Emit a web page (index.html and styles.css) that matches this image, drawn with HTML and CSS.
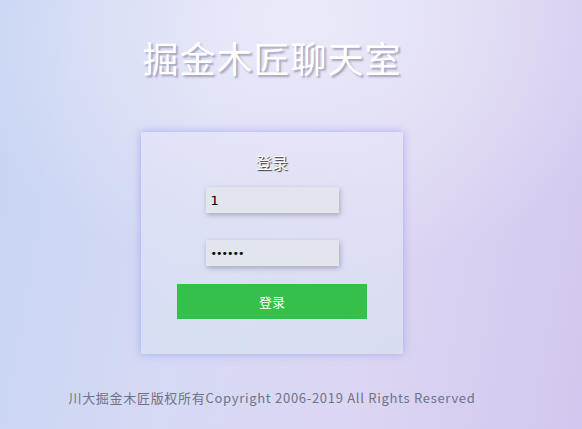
FILE: index.html
```html
<!DOCTYPE html>
<html lang="zh">
<head>
<meta charset="utf-8">
<title>掘金木匠聊天室</title>
<link rel="stylesheet" href="styles.css">
</head>
<body>
<div class="page">
  <h1 class="title">掘金木匠聊天室</h1>
  <form class="card">
    <h2 class="card-title">登录</h2>
    <input class="field" type="text" value="1">
    <input class="field field-pass" type="password" value="123456">
    <button class="btn" type="button">登录</button>
  </form>
  <p class="footer">川大掘金木匠版权所有Copyright 2006-2019 All Rights Reserved</p>
</div>
</body>
</html>
```
FILE: styles.css
```css
html, body {
  margin: 0;
  height: 100%;
}
body {
  font-family: "Noto Sans CJK SC", "Noto Sans", sans-serif;
  background:
    radial-gradient(ellipse 360px 260px at 300px 20px, rgba(236,236,250,0.9), rgba(236,236,250,0) 100%),
    linear-gradient(100deg, #c6d4f2 0%, #d6daf4 35%, #dcd6f2 65%, #d3c6ee 100%);
  overflow: hidden;
}
.page {
  width: 544px;
  display: flex;
  flex-direction: column;
  align-items: center;
}
.title {
  margin: 32px 0 0;
  font-size: 36px;
  font-weight: 400;
  line-height: 50px;
  letter-spacing: 1px;
  color: #fff;
  text-shadow: 2px 2px 2px rgba(90,80,110,0.45);
}
.card {
  margin-top: 50px;
  width: 262px;
  height: 222px;
  box-sizing: border-box;
  background: linear-gradient(180deg, rgba(232,230,250,0.5), rgba(214,226,242,0.6));
  box-shadow: 0 0 8px rgba(150,150,240,0.75);
  display: flex;
  flex-direction: column;
  align-items: center;
}
.card-title {
  margin: 18px 0 0;
  font-size: 16px;
  font-weight: 400;
  line-height: 24px;
  color: #fff;
  text-shadow: 1px 1px 1px #333;
}
.field {
  width: 133px;
  height: 26px;
  box-sizing: border-box;
  margin-top: 13px;
  border: none;
  outline: none;
  padding: 0 5px;
  background: #e3e5ec;
  box-shadow: 1px 2px 5px rgba(60,60,90,0.35);
  font-family: "DejaVu Sans", sans-serif;
  font-size: 13px;
  color: #000;
}
.field-pass {
  margin-top: 27px;
  font-size: 11px;
  letter-spacing: -1px;
}
.btn {
  margin-top: 18px;
  width: 190px;
  height: 35px;
  border: none;
  background: #34c04a;
  color: #fff;
  font-family: "Noto Sans CJK SC", sans-serif;
  font-size: 13px;
}
.footer {
  margin: 34px 0 0;
  font-size: 13px;
  letter-spacing: 0.7px;
  color: #6d7488;
  line-height: 20px;
}
```
